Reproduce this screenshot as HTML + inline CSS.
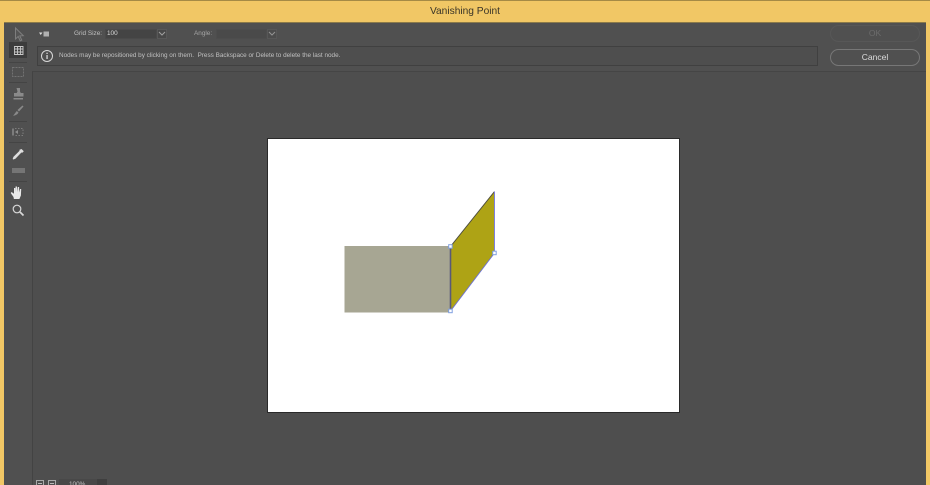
<!DOCTYPE html>
<html>
<head>
<meta charset="utf-8">
<style>
html,body{margin:0;padding:0;width:930px;height:485px;overflow:hidden;background:#f1c765;font-family:"Liberation Sans",sans-serif}
#w{position:relative;width:930px;height:485px;overflow:hidden;background:#f1c765}
#b{position:absolute;left:0;top:0;width:930px;height:485px;overflow:hidden;filter:blur(.35px)}
.a{position:absolute;box-sizing:border-box}
.t{position:absolute;white-space:nowrap;font-size:6.4px;color:#c0c0c0;line-height:10px}
</style>
</head>
<body>
<div id="w"><div id="b">
<div class="a" style="left:0;top:0;width:930px;height:1px;background:#a58a45"></div>
<div class="t" style="left:0;width:930px;text-align:center;top:5px;font-size:10.2px;line-height:13px;color:#3a3528">Vanishing Point</div>
<!-- main panel -->
<div class="a" style="left:4px;top:22px;width:922px;height:463px;background:#505050;border-top:1px solid #8b7a4a"></div>
<!-- canvas region -->
<div class="a" style="left:32px;top:71px;width:894px;height:414px;background:#4e4e4e;border-left:1px solid #434343;border-top:1px solid #454545"></div>
<!-- top options -->
<svg class="a" style="left:38px;top:30px" width="12" height="8"><path d="M1 2.500h3.500L2.700 5z" fill="#ddd"/><rect x="5.500" y="1.500" width="5.500" height="5" fill="#b0b0b0"/></svg>
<div class="t" style="left:74px;top:29px">Grid Size:</div>
<div class="a" style="left:105px;top:29px;width:52px;height:10px;background:#444;border:1px solid #4a4a4a"></div>
<div class="t" style="left:107px;top:29px;color:#dcdcdc">100</div>
<div class="a" style="left:157px;top:29px;width:10px;height:10px;background:#484848;border:1px solid #585858"></div>
<svg class="a" style="left:158px;top:31px" width="9" height="6"><path d="M1 1l3 3 3-3" fill="none" stroke="#a0a0a0"/></svg>
<div class="t" style="left:194px;top:29px;color:#a4a4a4">Angle:</div>
<div class="a" style="left:216px;top:29px;width:51px;height:10px;background:#4a4a4a;border:1px solid #4d4d4d"></div>
<div class="a" style="left:267px;top:29px;width:10px;height:10px;background:#4c4c4c;border:1px solid #575757"></div>
<svg class="a" style="left:268px;top:31px" width="9" height="6"><path d="M1 1l3 3 3-3" fill="none" stroke="#949494"/></svg>
<!-- info bar -->
<div class="a" style="left:37px;top:46px;width:781px;height:20px;background:#4e4e4e;border:1px solid #404040"></div>
<svg class="a" style="left:40px;top:49px" width="14" height="14"><circle cx="7" cy="7" r="5.500" fill="none" stroke="#d8d8d8" stroke-width="1"/><rect x="6.400" y="6" width="1.300" height="4" fill="#d8d8d8"/><rect x="6.400" y="3.700" width="1.300" height="1.300" fill="#d8d8d8"/></svg>
<div class="t" style="left:59px;top:51px;font-size:6.37px">Nodes may be repositioned by clicking on them.&nbsp; Press Backspace or Delete to delete the last node.</div>
<!-- buttons -->
<div class="a" style="left:830px;top:25px;width:90px;height:17px;border:1px solid #575757;border-radius:9px"></div>
<div class="t" style="left:830px;width:90px;text-align:center;top:28px;font-size:8.500px;line-height:11px;color:#6c6c6c">OK</div>
<div class="a" style="left:830px;top:49px;width:90px;height:17px;border:1px solid #777;border-radius:9px"></div>
<div class="t" style="left:830px;width:90px;text-align:center;top:52px;font-size:8.500px;line-height:11px;color:#dcdcdc">Cancel</div>
<!-- tools -->
<div class="a" style="left:9px;top:62px;width:18px;height:1px;background:#444"></div>
<div class="a" style="left:9px;top:42px;width:18px;height:16px;background:#3c3c3c"></div>
<div class="a" style="left:9px;top:82px;width:18px;height:1px;background:#444"></div>
<div class="a" style="left:9px;top:121px;width:18px;height:1px;background:#444"></div>
<div class="a" style="left:9px;top:142px;width:18px;height:1px;background:#444"></div>
<div class="a" style="left:9px;top:181px;width:18px;height:1px;background:#444"></div>
<svg class="a" style="left:0;top:20px" width="32" height="210">
<path d="M15.500 8v11l2.700-2.500 2 4.300 1.600-.7-2-4.200 3.500-.2z" fill="#555" stroke="#7e7e7e" stroke-width="1"/>
<g fill="none" stroke="#c8c8c8" stroke-width=".9"><path d="M14.500 26.500h8.500v8h-8.500zM17.500 26.500v8M20.500 26.500v8M14.500 29h8.500M14.500 32h8.500"/></g>
<rect x="12.500" y="47.500" width="11" height="9" fill="none" stroke="#727272" stroke-dasharray="2 1"/>
<path d="M16.500 68h3.500v3.500l.8 1.500h2.700v3.500h-9.500V73h2.700l.8-1.500zM13.500 78h9.500v1.500h-9.500z" fill="#8a8a8a"/>
<path d="M22.500 85.500l1 1-4.500 5-1.500-1.500zM16.800 91l1.700 1.500c-1 2-3 3-5.500 3.300 1.300-1.300 2.300-3.300 3.800-4.800z" fill="#8a8a8a"/>
<path d="M12 108.500h2v7h-2z" fill="#7c7c7c"/>
<path d="M15 108.500h8v7h-8" fill="none" stroke="#7c7c7c" stroke-width="1" stroke-dasharray="1.500 1.500"/>
<path d="M15 112l3-2v4z" fill="#8c8c8c"/>
<path d="M21.500 129l2.300 2.300-1.500 1.500-.9-.3-6 6.200-1.700.7c-.6.300-1.200-.3-.9-.9l.7-1.700 6.100-6-.3-.9z" fill="#dedede"/>
<rect x="12" y="148" width="13" height="5" fill="#757575"/>
<path d="M13.500 177l-2.800-4 .9-1 2.400 1.800V168h1.300v4l.3-5.500h1.400l.2 5.500.6-5h1.300v5.500l.9-3.500h1.200l-.3 6.500-1.500 3.500h-5.500z" fill="#e8e8e8"/>
<circle cx="17" cy="189" r="3.800" fill="none" stroke="#d8d8d8" stroke-width="1.200"/>
<path d="M20 192l3.500 3.500" stroke="#d8d8d8" stroke-width="1.700"/>
</svg>
<!-- bottom controls -->
<div class="a" style="left:36px;top:480px;width:8px;height:8px;border:1px solid #aaa"></div>
<div class="a" style="left:38px;top:483px;width:4px;height:1px;background:#b8b8b8"></div>
<div class="a" style="left:48px;top:480px;width:8px;height:8px;border:1px solid #aaa"></div>
<div class="a" style="left:50px;top:483px;width:4px;height:1px;background:#b8b8b8"></div>
<div class="a" style="left:59px;top:479px;width:38px;height:8px;background:#484848"></div>
<div class="t" style="left:69px;top:480px;color:#c0c0c0">100%</div>
<div class="a" style="left:97px;top:479px;width:10px;height:8px;background:#3f3f3f"></div>
<!-- image -->
<div class="a" style="left:267px;top:138px;width:413px;height:275px;background:#fff;border:1.500px solid #2a2a2a"></div>
<svg class="a" style="left:330px;top:180px" width="180" height="140">
<rect x="14.500" y="66" width="106" height="66.500" fill="#a7a693"/>
<path d="M120.500 66.500L164.500 11.500V73L120.500 131z" fill="#aea315"/>
<path d="M120.500 66.500L164.500 11.500" stroke="#4a4a3c" stroke-width="1"/>
<path d="M120.500 66v65" stroke="#5a5a78" stroke-width="1.600"/>
<path d="M164.500 11.500V73" stroke="#7d80e0" stroke-width="1"/>
<path d="M164.500 73L120.500 131" stroke="#6f73cf" stroke-width="1"/>
<g fill="#fff" stroke="#7f9fe0" stroke-width="1">
<rect x="118.700" y="64.700" width="3.500" height="3.500"/>
<rect x="118.700" y="129.200" width="3.500" height="3.500"/>
<rect x="162.700" y="71.200" width="3.500" height="3.500"/>
</g>
</svg>
</div></div>
</body>
</html>
